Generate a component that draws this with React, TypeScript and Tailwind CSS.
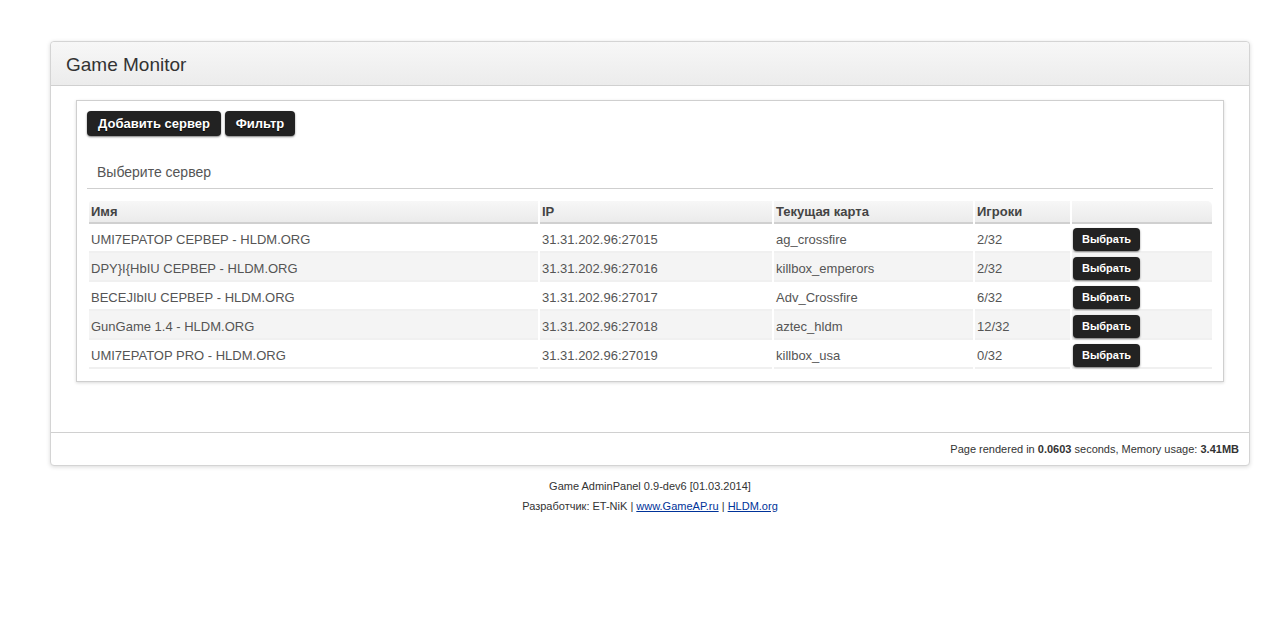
import React from "react";

const servers = [
  { name: "UMI7EPATOP СЕРВЕР - HLDM.ORG", ip: "31.31.202.96:27015", map: "ag_crossfire", players: "2/32" },
  { name: "DPY}I{HbIU СЕРВЕР - HLDM.ORG", ip: "31.31.202.96:27016", map: "killbox_emperors", players: "2/32" },
  { name: "BECEJIbIU СЕРВЕР - HLDM.ORG", ip: "31.31.202.96:27017", map: "Adv_Crossfire", players: "6/32" },
  { name: "GunGame 1.4 - HLDM.ORG", ip: "31.31.202.96:27018", map: "aztec_hldm", players: "12/32" },
  { name: "UMI7EPATOP PRO - HLDM.ORG", ip: "31.31.202.96:27019", map: "killbox_usa", players: "0/32" },
];

const cols = "grid grid-cols-[449px_232px_199px_95px_140px] gap-x-[2px]";

export default function App() {
  return (
    <div className="min-h-screen bg-white text-[#333] font-['Liberation_Sans',Arial,sans-serif]">
      <div className="pt-[41px] pl-[50px]">
        <div className="w-[1200px] rounded-[4px] border border-[#d4d4d4] bg-white shadow-[0_1px_4px_rgba(0,0,0,0.15)]">
          <div className="h-[44px] flex items-center px-[15px] pt-[4px] rounded-t-[4px] border-b border-[#d0d0d0] bg-gradient-to-b from-[#f7f7f7] to-[#ececec]">
            <h1 className="text-[19px] text-[#333]">Game Monitor</h1>
          </div>

          <div className="px-[25px] pt-[14px] pb-[50px]">
            <div className="border border-[#cfcfcf] shadow-[0_1px_3px_rgba(0,0,0,0.15)] px-[10px] pt-[10px] pb-[12px]">
              <div className="flex gap-[4px]">
                <button type="button" className="h-[25px] w-[134px] rounded-[4px] bg-[#222] text-white text-[13px] font-bold [text-shadow:0_1px_1px_rgba(0,0,0,0.8)] shadow-[0_1px_2px_rgba(0,0,0,0.5)]">
                  Добавить сервер
                </button>
                <button type="button" className="h-[25px] w-[70px] rounded-[4px] bg-[#222] text-white text-[13px] font-bold [text-shadow:0_1px_1px_rgba(0,0,0,0.8)] shadow-[0_1px_2px_rgba(0,0,0,0.5)]">
                  Фильтр
                </button>
              </div>

              <div className="mt-[20px] h-[33px] flex items-center pl-[10px] pt-[1px] border-b border-[#cfcfcf] text-[14px] text-[#555]">
                Выберите сервер
              </div>

              <div className="mt-[12px] ml-[2px]">
                <div className={`${cols} text-[13px] font-bold text-[#444]`}>
                  {["Имя", "IP", "Текущая карта", "Игроки", ""].map((h, i) => (
                    <div
                      key={i}
                      className={`h-[23px] flex items-center pl-[2px] border-b-2 border-[#d0d0d0] bg-gradient-to-b from-[#f7f7f7] to-[#ebebeb] ${i === 4 ? "rounded-tr-[5px]" : ""} ${i === 0 ? "rounded-tl-[3px]" : ""}`}
                    >
                      {h}
                    </div>
                  ))}
                </div>
                {servers.map((s, r) => (
                  <div key={s.ip} className={`${cols} text-[13px] text-[#555]`}>
                    {[s.name, s.ip, s.map, s.players].map((v, i) => (
                      <div
                        key={i}
                        className={`h-[29px] flex items-center pl-[2px] pt-[4px] border-b-2 border-[#f0f0f0] ${r % 2 === 1 ? "bg-[#f4f4f4]" : ""}`}
                      >
                        {v}
                      </div>
                    ))}
                    <div className={`h-[29px] flex items-center pl-[1px] pt-[3px] border-b-2 border-[#f0f0f0] ${r % 2 === 1 ? "bg-[#f4f4f4]" : ""}`}>
                      <button type="button" className="h-[23px] w-[67px] rounded-[4px] bg-[#222] text-white text-[11px] font-bold shadow-[0_1px_2px_rgba(0,0,0,0.5)]">
                        Выбрать
                      </button>
                    </div>
                  </div>
                ))}
              </div>
            </div>
          </div>

          <div className="h-[33px] flex items-center justify-end px-[10px] border-t border-[#d0d0d0] text-[11px] text-[#333]">
            <span>
              Page rendered in <b>0.0603</b> seconds, Memory usage: <b>3.41MB</b>
            </span>
          </div>
        </div>
      </div>

      <div className="ml-[50px] w-[1200px] pt-[10px] text-center text-[11px] leading-[20px] text-[#333]">
        <p>Game AdminPanel 0.9-dev6 [01.03.2014]</p>
        <p>
          Разработчик: ET-NiK |{" "}
          <a href="#" className="underline text-[#003399]">www.GameAP.ru</a> |{" "}
          <a href="#" className="underline text-[#003399]">HLDM.org</a>
        </p>
      </div>
    </div>
  );
}
